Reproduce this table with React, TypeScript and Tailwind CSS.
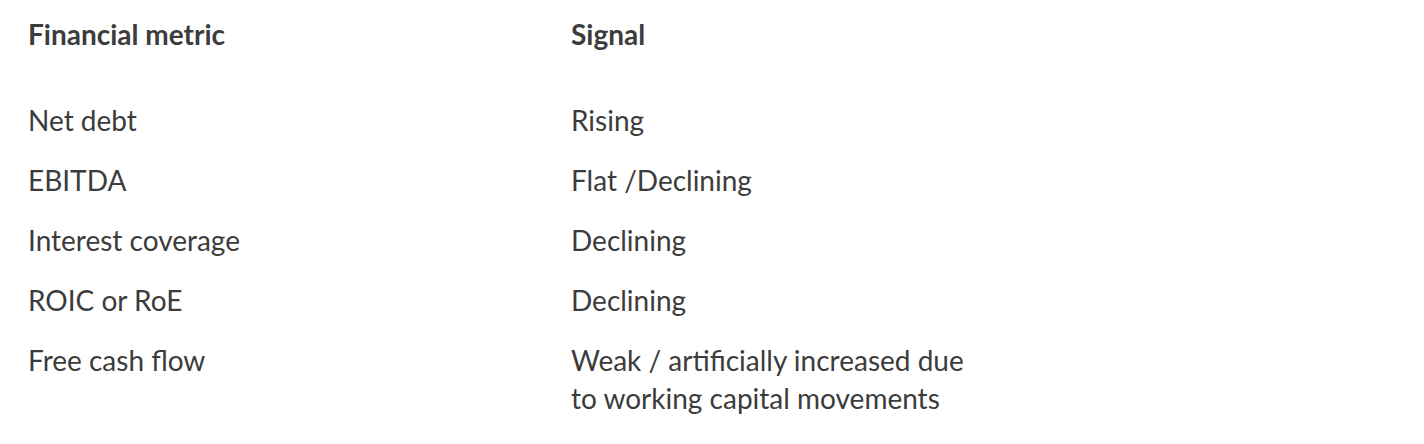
const rows: [string, string[]][] = [
  ['Net debt', ['Rising']],
  ['EBITDA', ['Flat /Declining']],
  ['Interest coverage', ['Declining']],
  ['ROIC or RoE', ['Declining']],
  ['Free cash flow', ['Weak / artificially increased due', 'to working capital movements']],
]

export default function App() {
  return (
    <div
      className="w-[1424px] h-[444px] bg-white text-[#3c3c3c] pl-[28px] pt-[15px]"
      style={{ fontFamily: 'Lato, "Open Sans", sans-serif' }}
    >
      <div className="grid grid-cols-[543px_500px] text-[28px] leading-[38px]">
        <div className="font-bold">Financial metric</div>
        <div className="font-bold">Signal</div>
      </div>
      <div className="grid grid-cols-[543px_500px] gap-y-[22px] mt-[48px] text-[28px] leading-[38px]">
        {rows.map(([metric, signal]) => (
          <div key={metric} className="contents">
            <div>{metric}</div>
            <div>
              {signal.map((line) => (
                <div key={line}>{line}</div>
              ))}
            </div>
          </div>
        ))}
      </div>
    </div>
  )
}
